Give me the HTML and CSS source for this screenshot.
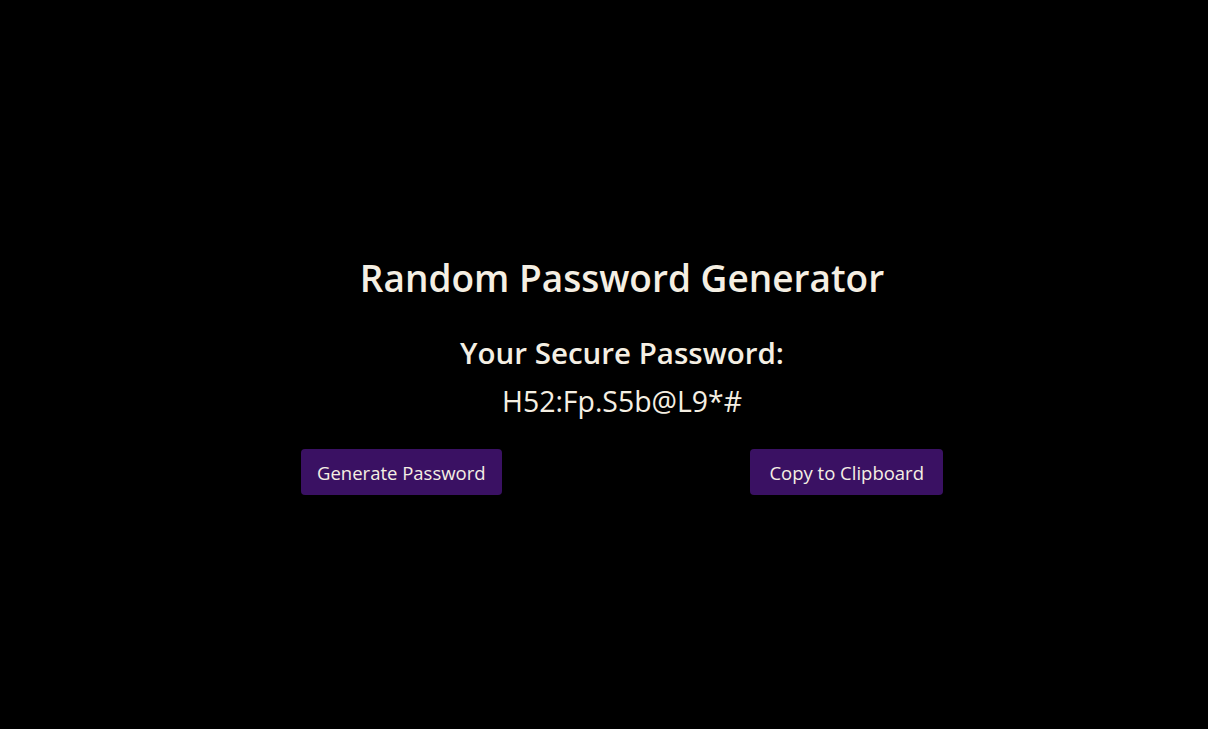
FILE: index.html
```html
<!DOCTYPE html>
<html lang="en">
<head>
<meta charset="utf-8">
<title>Random Password Generator</title>
<link rel="stylesheet" href="styles.css">
</head>
<body>
<main class="page">
  <div class="card">
    <h1 class="title">Random Password Generator</h1>
    <h2 class="subtitle">Your Secure Password:</h2>
    <p class="password">H52:Fp.S5b@L9*#</p>
    <div class="actions">
      <button class="btn" type="button">Generate Password</button>
      <button class="btn copy" type="button">Copy to Clipboard</button>
    </div>
  </div>
</main>
</body>
</html>
```

FILE: styles.css
```css
html, body {
  margin: 0;
  padding: 0;
  background: #000;
}
body {
  font-family: "Open Sans", "Noto Sans", sans-serif;
  color: #f5efe3;
}
.page {
  height: 729px;
  display: flex;
  justify-content: center;
  padding-left: 36px;
  box-sizing: border-box;
}
.card {
  width: 642px;
  padding-top: 252px;
  display: flex;
  flex-direction: column;
  align-items: center;
}
.title {
  margin: 0;
  font-size: 37px;
  font-weight: 600;
  line-height: 52px;
}
.subtitle {
  margin: 29px 0 0;
  font-size: 29.5px;
  font-weight: 600;
  line-height: 40px;
}
.password {
  margin: 8px 0 0;
  font-size: 28.4px;
  line-height: 40px;
}
.actions {
  margin-top: 28px;
  width: 100%;
  display: flex;
  justify-content: space-between;
}
.btn {
  font-family: inherit;
  font-size: 18.5px;
  color: #f5efe3;
  background: #3a1163;
  border: none;
  border-radius: 4px;
  height: 46px;
  padding: 0 16px;
}
.btn.copy {
  padding: 0 19px;
}
```
